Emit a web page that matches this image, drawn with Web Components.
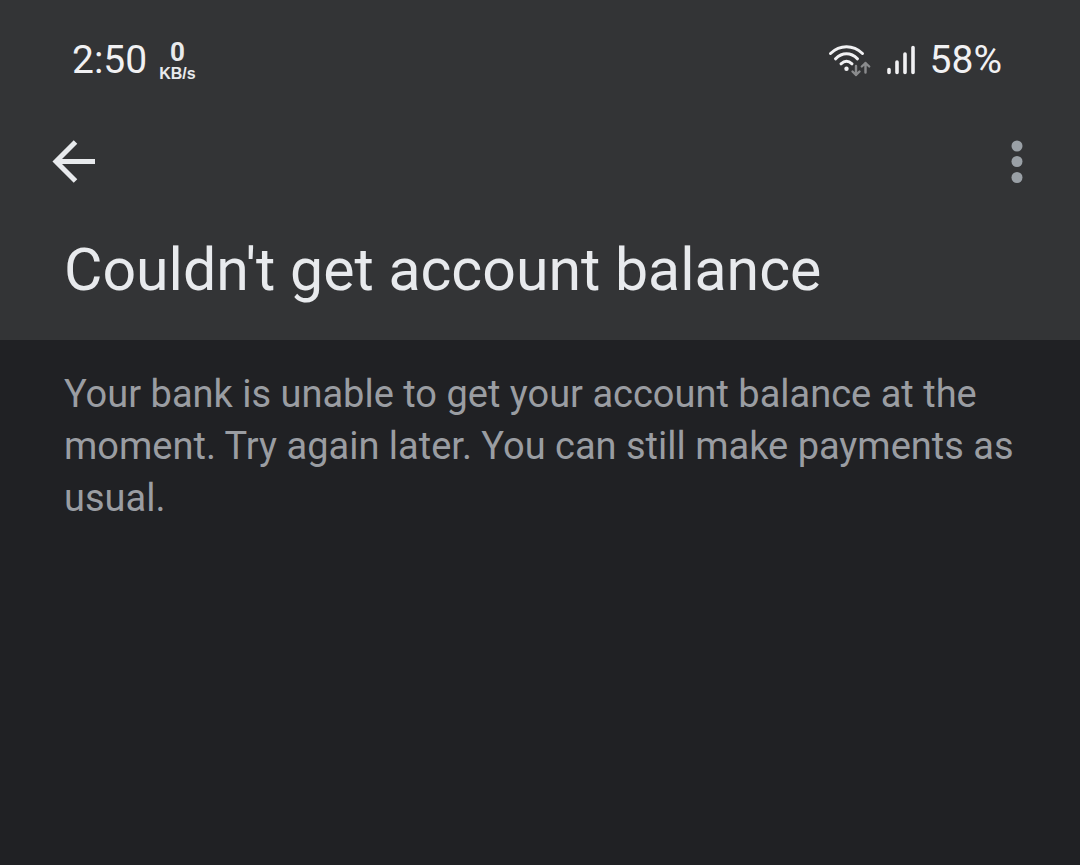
<!DOCTYPE html>
<html lang="en">
<head>
<meta charset="utf-8">
<meta name="viewport" content="width=device-width, initial-scale=1">
<title>Account balance</title>
<style>
  html { background: #202124; }
  body { margin: 0; font-family: Roboto, sans-serif; color: #e8eaed; }
</style>
</head>
<body>
<balance-screen></balance-screen>
<script>
  function define(name, html) {
    const template = document.createElement('template');
    template.innerHTML = html;
    customElements.define(name, class extends HTMLElement {
      constructor() {
        super();
        this.attachShadow({ mode: 'open' }).append(template.content.cloneNode(true));
      }
    });
  }

  define('network-speed', `
    <style>
      :host { display: flex; flex-direction: column; align-items: center; font-weight: 700; color: #e8eaed; }
      .value { font-size: 26px; line-height: 28px; }
      .unit { font: 700 16px/16px "Liberation Sans", Arial, sans-serif; }
    </style>
    <span class="value"><slot name="value"></slot></span>
    <span class="unit"><slot name="unit"></slot></span>`);

  define('wifi-icon', `
    <style>:host { display: block; } svg { display: block; }</style>
    <svg width="44" height="36" viewBox="0 0 44 36" fill="none" stroke-linecap="round" aria-hidden="true">
      <g stroke="#f1f1f3" stroke-width="3">
        <path d="M2.5 11.5C12 2.5 25 2.5 34.500 11.500"/>
        <path d="M7.500 16.800C14.300 10.200 22.700 10.200 29.500 16.800"/>
        <path d="M13 21.800C16.500 18.600 20.500 18.600 24 21.800"/>
      </g>
      <circle cx="18.500" cy="26.800" r="2.200" fill="#f1f1f3"/>
      <g stroke="#8a8b8d" stroke-width="2.400" stroke-linejoin="round">
        <path d="M28 24V33M24.500 29.500L28 33L31.500 29.500"/>
        <path d="M37.500 30.500V21M33.800 24.500L37.500 21L41.200 24.500"/>
      </g>
    </svg>`);

  define('signal-icon', `
    <style>:host { display: block; } svg { display: block; }</style>
    <svg width="30" height="32" viewBox="0 0 30 32" fill="none" stroke="#f1f1f3" stroke-width="3.600" stroke-linecap="round" aria-hidden="true">
      <path d="M3 25.500V28.500M11 18V28.500M19 10V28.500M27 3.500V28.500"/>
    </svg>`);

  define('status-bar', `
    <style>
      :host { display: flex; justify-content: space-between; align-items: center; height: 120px; padding: 0 78px 0 72px; box-sizing: border-box; font-size: 39px; line-height: 48px; color: #f1f1f3; }
      .group { display: flex; align-items: center; }
      .start { gap: 12px; }
      .end { gap: 14px; }
    </style>
    <div class="group start">
      <time>2:50</time>
      <network-speed><span slot="value">0</span><span slot="unit">KB/s</span></network-speed>
    </div>
    <div class="group end">
      <wifi-icon></wifi-icon>
      <signal-icon></signal-icon>
      <span>58%</span>
    </div>`);

  define('icon-button', `
    <style>
      :host { display: block; }
      button { display: block; padding: 8px; border: 0; background: none; color: inherit; cursor: pointer; }
    </style>
    <button type="button"><slot></slot></button>`);

  define('app-bar', `
    <style>
      :host { display: block; }
      nav { display: flex; justify-content: space-between; align-items: center; height: 84px; padding: 0 48px 0 44px; }
      svg { display: block; }
      .more { color: #9aa0a6; }
      h1 { margin: 0; padding: 30px 64px 34px; font-size: 59px; line-height: 72px; font-weight: 400; }
    </style>
    <nav>
      <icon-button>
        <svg width="44" height="44" viewBox="0 0 44 44" role="img" aria-label="Back" fill="none" stroke="#e8eaed" stroke-width="5">
          <path d="M23.500 2L4 21.500L23.500 41M5 21.500H43"/>
        </svg>
      </icon-button>
      <icon-button class="more">
        <svg width="14" height="44" viewBox="0 0 14 44" role="img" aria-label="More options" fill="currentColor">
          <circle cx="7" cy="6" r="5.500"/><circle cx="7" cy="21.500" r="5.500"/><circle cx="7" cy="37.500" r="5.500"/>
        </svg>
      </icon-button>
    </nav>
    <h1><slot></slot></h1>`);

  define('message-body', `
    <style>
      :host { display: block; padding: 28px 64px; }
      p { margin: 0; color: #9a9da2; font-size: 38px; line-height: 52px; }
    </style>
    <p><slot></slot></p>`);

  define('balance-screen', `
    <style>
      :host { display: block; }
      header { background: #333436; }
    </style>
    <header>
      <status-bar></status-bar>
      <app-bar>Couldn't get account balance</app-bar>
    </header>
    <main>
      <message-body>Your bank is unable to get your account balance at the moment. Try again later. You can still make payments as usual.</message-body>
    </main>`);
</script>
</body>
</html>
